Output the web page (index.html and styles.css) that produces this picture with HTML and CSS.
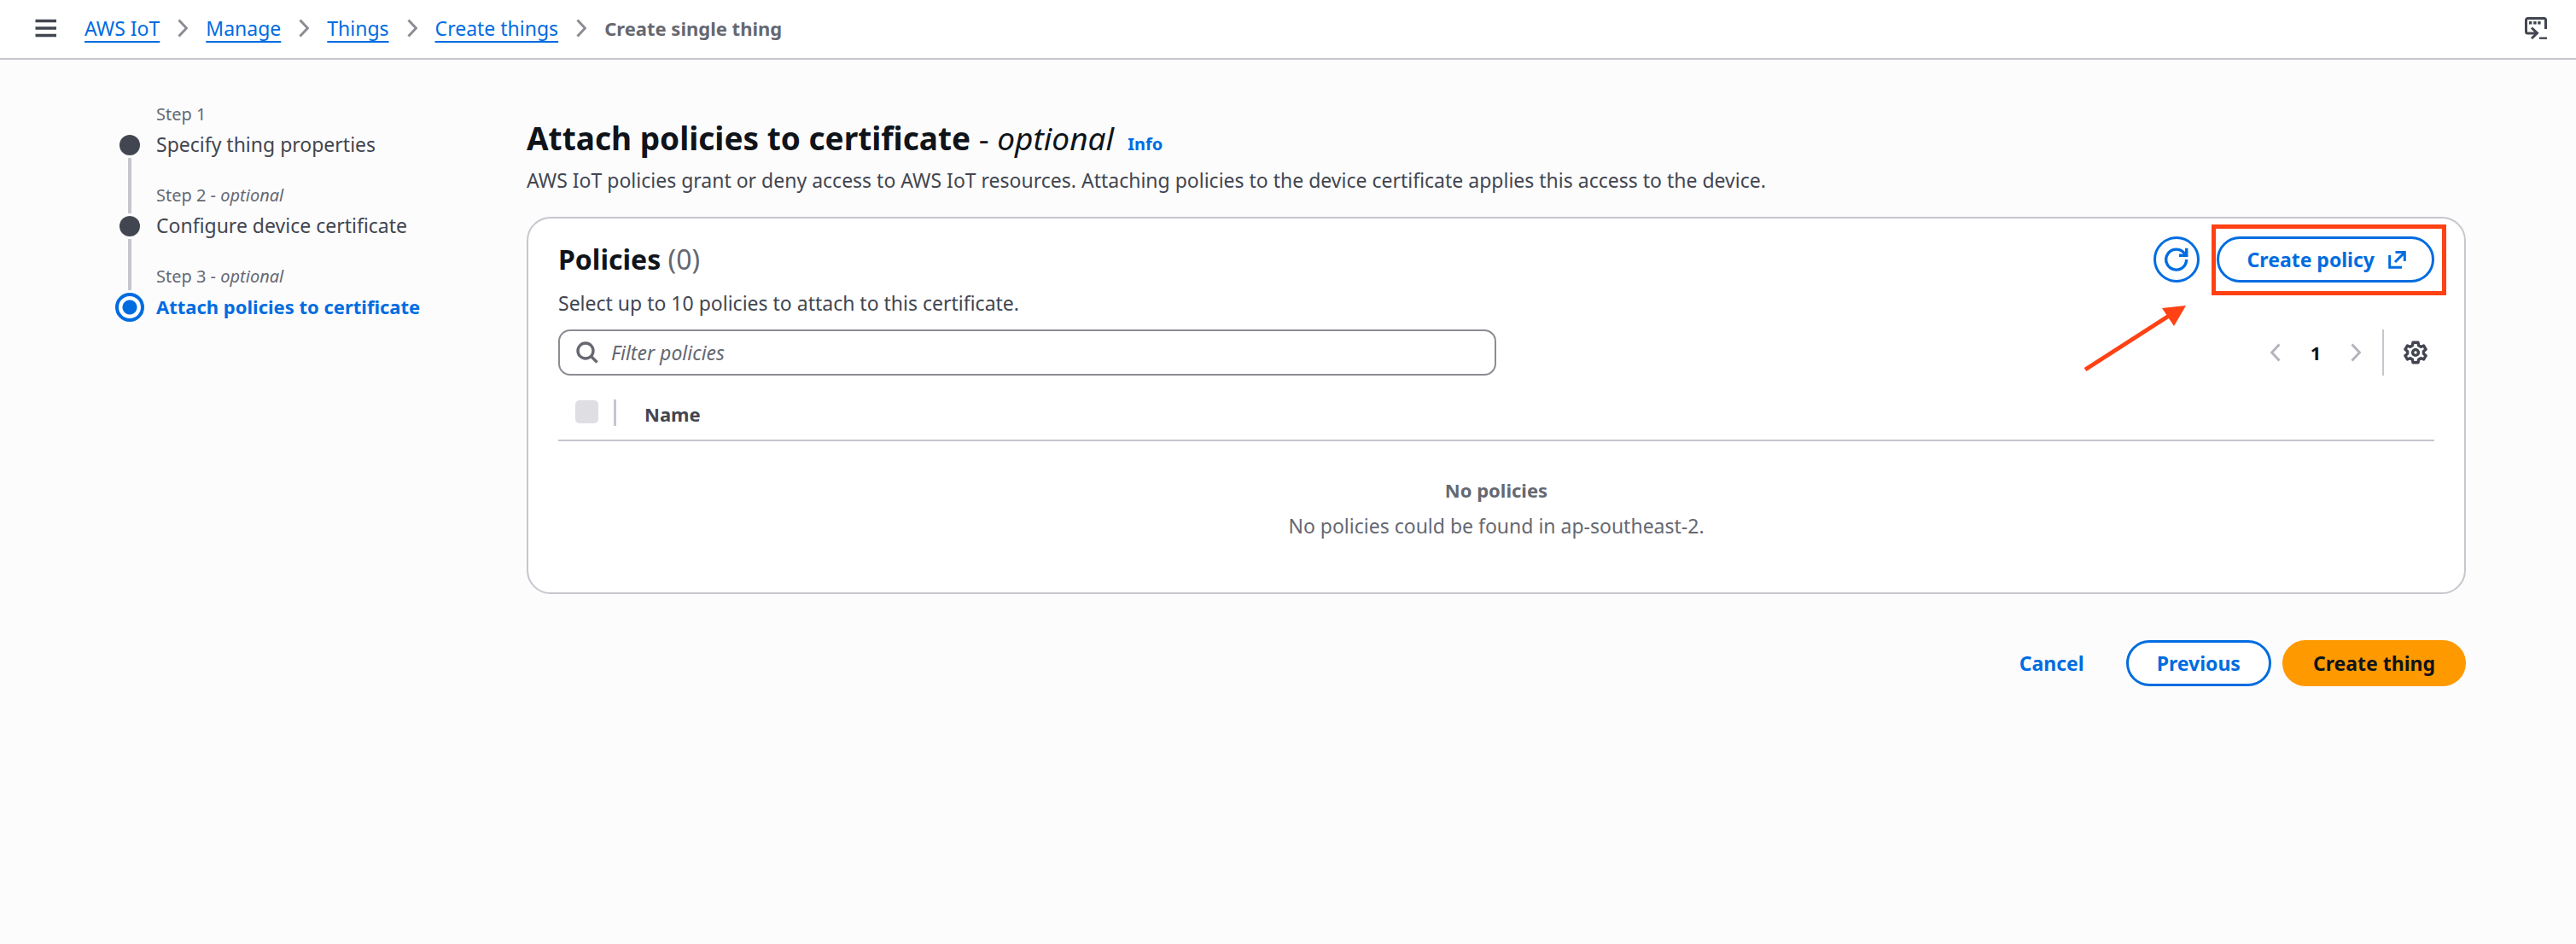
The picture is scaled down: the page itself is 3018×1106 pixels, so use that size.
FILE: index.html
```html
<!DOCTYPE html>
<html lang="en">
<head>
  <meta charset="UTF-8">
  <meta name="viewport" content="width=device-width, initial-scale=1.0">
  <title>Create single thing | AWS IoT</title>
  <link rel="stylesheet" href="styles.css">
</head>
<body>
  <header class="topbar">
    <button type="button" class="icon-btn menu-btn" aria-label="Open navigation">
      <svg width="26" height="22" viewBox="0 0 26 22" fill="none" stroke="currentColor" stroke-width="3.4"><path d="M0.5 2.5h24.5M0.5 11h24.5M0.5 19.5h24.5"/></svg>
    </button>
    <nav class="breadcrumbs" aria-label="Breadcrumbs">
      <a href="#">AWS IoT</a>
      <svg class="chevron" viewBox="0 0 12 22"><path d="M1.5 1.5L10.5 11L1.5 20.5"/></svg>
      <a href="#">Manage</a>
      <svg class="chevron" viewBox="0 0 12 22"><path d="M1.5 1.5L10.5 11L1.5 20.5"/></svg>
      <a href="#">Things</a>
      <svg class="chevron" viewBox="0 0 12 22"><path d="M1.5 1.5L10.5 11L1.5 20.5"/></svg>
      <a href="#">Create things</a>
      <svg class="chevron" viewBox="0 0 12 22"><path d="M1.5 1.5L10.5 11L1.5 20.5"/></svg>
      <span class="current">Create single thing</span>
    </nav>
    <button type="button" class="icon-btn shell-btn" aria-label="Open panel">
      <svg width="26" height="26" viewBox="0 0 26 26" fill="none" stroke="currentColor" stroke-width="3">
        <path d="M24.5 14V3.5a2 2 0 0 0-2-2h-19a2 2 0 0 0-2 2V17a2 2 0 0 0 2 2H14"/>
        <path d="M8 12.5l6.5 6.3L8 25"/>
        <path d="M17 24.7h9" stroke-width="2.4"/>
        <path d="M5 6.8h3.4M10.2 6.8h3.4M15.2 6.8h3.4" stroke-width="3.6"/>
      </svg>
    </button>
  </header>

  <div class="layout">
    <ol class="steps">
      <li class="step">
        <span class="step-label">Step 1</span>
        <span class="step-dot"></span>
        <a href="#" class="step-name">Specify thing properties</a>
        <span class="step-line"></span>
      </li>
      <li class="step">
        <span class="step-label">Step 2 - <i>optional</i></span>
        <span class="step-dot"></span>
        <a href="#" class="step-name">Configure device certificate</a>
        <span class="step-line"></span>
      </li>
      <li class="step active">
        <span class="step-label">Step 3 - <i>optional</i></span>
        <span class="step-dot"></span>
        <span class="step-name">Attach policies to certificate</span>
      </li>
    </ol>

    <main class="content">
      <div class="page-title">
        <h1>Attach policies to certificate <span class="optional">- <i>optional</i></span></h1>
        <a href="#" class="info">Info</a>
      </div>
      <p class="description">AWS IoT policies grant or deny access to AWS IoT resources. Attaching policies to the device certificate applies this access to the device.</p>

      <section class="card">
        <div class="card-header">
          <h2>Policies <span class="counter">(0)</span></h2>
          <div class="card-actions">
            <button type="button" class="btn btn-round" aria-label="Refresh">
              <svg width="28" height="28" viewBox="0 0 28 28" fill="none" stroke="currentColor" stroke-width="3.4">
                <path d="M25.7 14A12 12 0 1 1 23.8 7.6"/>
                <path d="M25.7 0.8v8.4H17"/>
              </svg>
            </button>
            <div class="highlight">
              <button type="button" class="btn btn-create">
                Create policy
                <svg width="21" height="21" viewBox="0 0 21 21" fill="none" stroke="currentColor" stroke-width="3">
                  <path d="M1.7 5v14.3H16"/>
                  <path d="M8.5 1.6h10.8V12M19 2L8 13"/>
                </svg>
              </button>
              <svg class="arrow" width="122" height="80" viewBox="0 0 122 80">
                <path d="M3 76L101 13" stroke="#ff4114" stroke-width="5"/>
                <path d="M121 1L93 4L107 25z" fill="#ff4114"/>
              </svg>
            </div>
          </div>
        </div>
        <p class="card-description">Select up to 10 policies to attach to this certificate.</p>

        <div class="toolbar">
          <div class="search">
            <svg width="26" height="26" viewBox="0 0 26 26" fill="none" stroke="currentColor" stroke-width="3.4">
              <circle cx="11" cy="11" r="9"/>
              <path d="M17.5 17.5L24.5 24.5"/>
            </svg>
            <input type="text" placeholder="Filter policies" aria-label="Filter policies">
          </div>
          <div class="pagination">
            <button type="button" class="icon-btn page-arrow" aria-label="Previous page" disabled>
              <svg class="chevron" viewBox="0 0 12 22"><path d="M10.5 1.5L1.5 11L10.5 20.5"/></svg>
            </button>
            <button type="button" class="icon-btn page-number">1</button>
            <button type="button" class="icon-btn page-arrow" aria-label="Next page" disabled>
              <svg class="chevron" viewBox="0 0 12 22"><path d="M1.5 1.5L10.5 11L1.5 20.5"/></svg>
            </button>
            <button type="button" class="icon-btn settings-btn" aria-label="Preferences">
              <svg width="28" height="28" viewBox="0 0 28 28" fill="none" stroke="currentColor" stroke-width="3.4" stroke-linejoin="round">
                <path d="M11 2.2h6l0.6 3.6 2.6 1.5 3.4-1.3 2.5 4.3-2.7 2.5v2.4l2.7 2.5-2.5 4.3-3.4-1.3-2.6 1.5-0.6 3.6h-6l-0.6-3.6-2.6-1.5-3.4 1.3L1.9 17.7l2.7-2.5v-2.4L1.9 10.3 4.4 6l3.4 1.3 2.6-1.5z"/>
                <circle cx="14" cy="14" r="3.4"/>
              </svg>
            </button>
          </div>
        </div>

        <table class="policies">
          <thead>
            <tr>
              <th class="select-col"><input type="checkbox" aria-label="Select all policies" disabled></th>
              <th class="name-col">Name</th>
            </tr>
          </thead>
          <tbody>
            <tr>
              <td colspan="2" class="empty">
                <b>No policies</b>
                <p>No policies could be found in ap-southeast-2.</p>
              </td>
            </tr>
          </tbody>
        </table>
      </section>

      <div class="form-actions">
        <button type="button" class="btn btn-link">Cancel</button>
        <button type="button" class="btn">Previous</button>
        <button type="submit" class="btn btn-primary">Create thing</button>
      </div>
    </main>
  </div>
</body>
</html>
```

FILE: styles.css
```css
* {
  margin: 0;
  padding: 0;
  box-sizing: border-box;
}

body {
  min-height: 100vh;
  background-color: #fcfcfd;
  color: #424650;
  font-family: 'Noto Sans', 'Open Sans', sans-serif;
  font-size: 23px;
  line-height: 36px;
}

button, input {
  font: inherit;
}

svg {
  display: block;
  flex: none;
}

a {
  color: #006ce0;
}

/* top bar */
.topbar {
  display: flex;
  align-items: center;
  height: 70px;
  padding: 0 34px 2px 41px;
  background-color: #ffffff;
  border-bottom: 2px solid #c6c6cd;
}

.icon-btn {
  border: none;
  background: none;
  color: #424650;
  cursor: pointer;
}

.shell-btn {
  margin-left: auto;
}

.breadcrumbs {
  display: flex;
  align-items: center;
  gap: 21px;
  margin-left: 32px;
}

.breadcrumbs a {
  text-underline-offset: 6px;
  text-decoration-thickness: 2px;
}

.breadcrumbs .current {
  color: #656871;
  font-size: 22px;
  font-weight: 700;
}

.chevron {
  width: 12px;
  height: 22px;
  fill: none;
  stroke: #8c8c94;
  stroke-width: 3;
}

/* page */
.layout {
  display: grid;
  grid-template-columns: 488px 1fr;
  padding: 46px 129px;
}

/* steps */
.steps {
  list-style: none;
}

.step {
  display: grid;
  grid-template-columns: 46px 1fr;
  grid-template-rows: 36px 36px 23px;
  column-gap: 8px;
  justify-items: start;
}

.step-label {
  grid-column: 2;
  color: #656871;
  font-size: 20px;
}

.step-dot {
  grid-column: 1;
  place-self: center;
  width: 24px;
  height: 24px;
  border-radius: 50%;
  background-color: #424650;
}

.step-name {
  grid-column: 2;
  color: #424650;
  line-height: 34px;
  text-decoration: none;
}

/* runs past its row, down to the next dot */
.step-line {
  grid-column: 1;
  grid-row: 3;
  justify-self: center;
  width: 4px;
  height: 65px;
  margin-top: -3px;
  background-color: #c6c6cd;
}

.step:nth-child(2) .step-line {
  height: 60px;
}

.step.active .step-name {
  color: #006ce0;
  font-size: 22px;
  font-weight: 700;
}

.step.active .step-dot {
  width: 34px;
  height: 34px;
  border: 4px solid #006ce0;
  background: radial-gradient(circle, #006ce0 8px, #ffffff 9px);
}

/* content */
.page-title {
  display: flex;
  align-items: baseline;
  gap: 16px;
  margin-top: 21px;
}

h1 {
  color: #0f141a;
  font-size: 37px;
  line-height: 50px;
}

.optional {
  font-weight: 400;
}

.info {
  font-size: 20px;
  font-weight: 700;
  text-decoration: none;
}

.description {
  margin-top: 6px;
}

.card {
  margin-top: 25px;
  padding: 21px 35px 0;
  border: 2px solid #c6c6cd;
  border-radius: 28px;
  background-color: #ffffff;
}

.card-header {
  display: flex;
  align-items: center;
  justify-content: space-between;
}

h2 {
  color: #0f141a;
  font-size: 32px;
  line-height: 40px;
}

.counter {
  color: #656871;
  font-weight: 400;
}

.card-actions {
  display: flex;
  gap: 20px;
}

.btn {
  display: flex;
  align-items: center;
  height: 54px;
  padding: 0 33px;
  border: 3px solid #006ce0;
  border-radius: 27px;
  background-color: #ffffff;
  color: #006ce0;
  font-weight: 700;
  cursor: pointer;
}

.btn-round {
  justify-content: center;
  width: 54px;
  padding: 0;
}

.btn-create {
  gap: 16px;
  padding-right: 30px;
}

/* red callout box round the button */
.highlight {
  position: relative;
}

.highlight::after {
  content: '';
  position: absolute;
  inset: -14px -14px -15px -6px;
  border: 5px solid #ff4114;
  pointer-events: none;
}

.arrow {
  position: absolute;
  top: 80px;
  right: 290px;
}

.card-description {
  margin-top: 6px;
}

.toolbar {
  display: flex;
  align-items: center;
  justify-content: space-between;
  margin-top: 13px;
}

.search {
  display: flex;
  align-items: center;
  gap: 15px;
  width: 50%;
  height: 54px;
  padding: 0 19px;
  border: 2px solid #8c8c94;
  border-radius: 14px;
  color: #656871;
}

.search input {
  flex: 1;
  border: none;
  outline: none;
  background: none;
}

.search input::placeholder {
  color: #656871;
  font-style: italic;
  opacity: 1;
}

.pagination {
  display: flex;
  align-items: center;
}

.page-number {
  width: 82px;
  color: #0f141a;
  font-size: 22px;
  font-weight: 700;
}

.page-arrow .chevron {
  stroke: #b4b4bb;
}

.settings-btn {
  display: flex;
  align-items: center;
  height: 54px;
  margin-left: 25px;
  padding: 0 8px 0 23px;
  border-left: 2px solid #c6c6cd;
}

/* table */
.policies {
  width: 100%;
  margin-top: 14px;
  border-collapse: collapse;
}

.policies th {
  height: 62px;
  border-bottom: 2px solid #c6c6cd;
  font-size: 22px;
  text-align: left;
}

.select-col {
  width: 68px;
  padding-left: 20px;
  background: linear-gradient(#c6c6cd, #c6c6cd) right 14px / 3px 31px no-repeat;
}

.select-col input {
  display: block;
  appearance: none;
  width: 27px;
  height: 27px;
  margin-bottom: 5px;
  border-radius: 5px;
  background-color: #dedee3;
}

.name-col {
  padding-left: 33px;
}

.empty {
  padding: 39px 0 60px;
  color: #656871;
  text-align: center;
}

.empty b {
  font-size: 22px;
}

.empty p {
  margin-top: 6px;
}

.form-actions {
  display: flex;
  justify-content: flex-end;
  gap: 13px;
  margin-top: 54px;
}

.btn-link {
  border-color: transparent;
  background: none;
}

.btn-primary {
  border-color: #ff9900;
  background-color: #ff9900;
  color: #0f141a;
}
```
